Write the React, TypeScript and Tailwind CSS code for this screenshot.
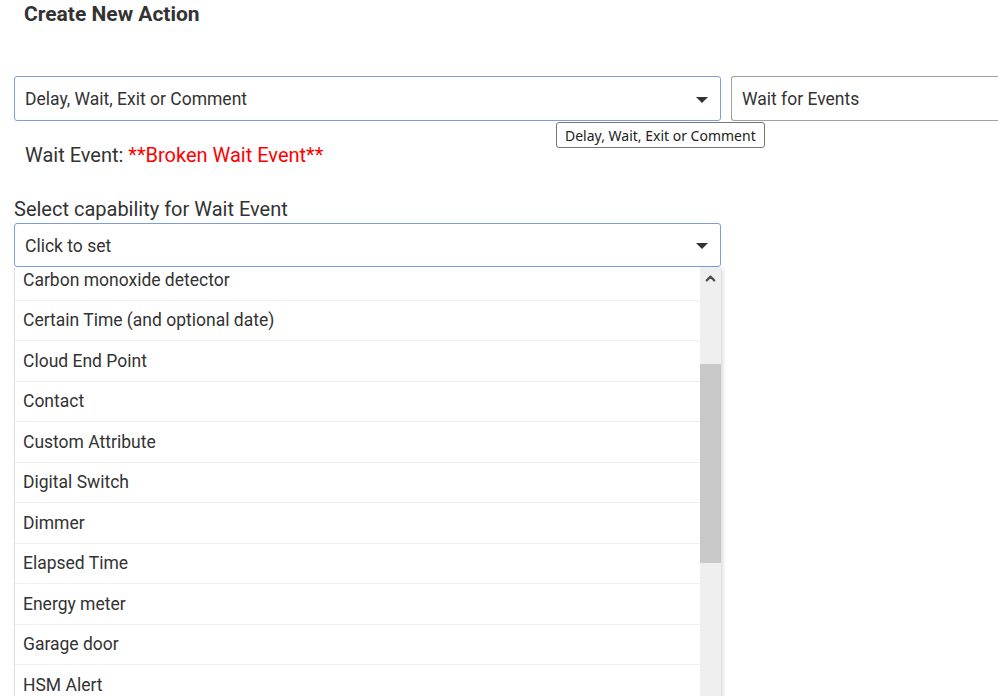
import { ChevronUp } from "lucide-react";

const options = [
  "Carbon monoxide detector",
  "Certain Time (and optional date)",
  "Cloud End Point",
  "Contact",
  "Custom Attribute",
  "Digital Switch",
  "Dimmer",
  "Elapsed Time",
  "Energy meter",
  "Garage door",
  "HSM Alert",
  "HSM Status",
];

function Caret() {
  return (
    <svg width="14" height="8" viewBox="0 0 14 8" className="shrink-0">
      <path d="M1 1 L13 1 L7 7 Z" fill="#333" />
    </svg>
  );
}

export default function App() {
  return (
    <div
      className="relative h-[696px] w-[998px] overflow-hidden bg-white text-[#333]"
      style={{ fontFamily: "Roboto, 'Liberation Sans', sans-serif" }}
    >
      <div className="px-6 pt-[2px] text-[21px] font-bold leading-6 text-[#333]">
        Create New Action
      </div>

      <div className="mt-[50px] flex gap-[10px] pl-[14px]">
        <div className="flex h-[45px] w-[707px] items-center justify-between rounded-[3px] border border-[#7d9fd6] pl-[10px] pr-[11px] pt-[2px] text-[17.5px]">
          <span>Delay, Wait, Exit or Comment</span>
          <Caret />
        </div>
        <div className="flex h-[45px] flex-1 items-center rounded-l-[3px] border border-r-0 border-[#a0a0a0] pl-[10px] pt-[2px] text-[17.5px]">
          Wait for Events
        </div>
      </div>

      <div
        className="absolute left-[556px] top-[122px] rounded-[3px] border border-[#767676] bg-white px-[8px] pb-[1px] pt-[3px] text-[14px] leading-[20px] text-[#222]"
        style={{ fontFamily: "'Noto Sans', 'Open Sans', sans-serif" }}
      >
        Delay, Wait, Exit or Comment
      </div>

      <div className="mt-[22px] pl-[25px] text-[20px] leading-6">
        Wait Event: <span className="text-[#ff0000]">**Broken Wait Event**</span>
      </div>

      <div className="mt-[30px] pl-[14px] text-[20px] leading-6">
        Select capability for Wait Event
      </div>

      <div className="ml-[14px] mt-[2px] flex h-[44px] w-[707px] items-center justify-between rounded-[3px] border border-[#7d9fd6] pl-[10px] pr-[11px] pt-[2px] text-[17.5px]">
        <span>Click to set</span>
        <Caret />
      </div>

      <div className="ml-[14px] flex h-[440px] w-[707px] overflow-hidden border-l border-[#e0e0e0] shadow-[2px_2px_4px_rgba(0,0,0,0.15)]">
        <div className="flex-1 overflow-hidden">
          <div className="-mt-[7px]">
            {options.map((o) => (
              <div
                key={o}
                className="flex h-[40.5px] items-center border-b border-[#eeeeee] pl-[8px] text-[17.5px]"
              >
                {o}
              </div>
            ))}
          </div>
        </div>
        <div className="flex w-[21px] flex-col bg-[#efefef]">
          <div className="flex h-[22px] items-center justify-center">
            <ChevronUp size={15} strokeWidth={3.5} color="#505050" />
          </div>
          <div className="mt-[75px] h-[199px] bg-[#c8c8c8]" />
        </div>
      </div>
    </div>
  );
}
